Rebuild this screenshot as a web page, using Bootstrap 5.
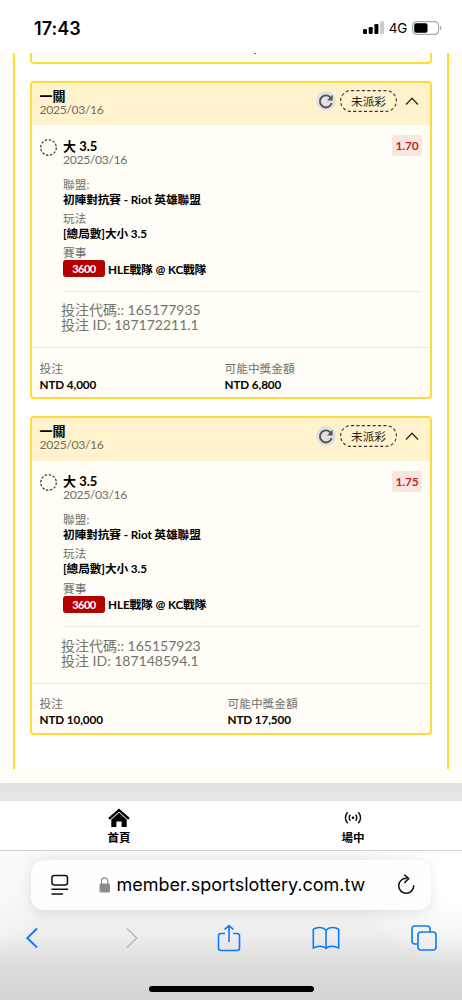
<!DOCTYPE html>
<html lang="zh-Hant">
<head>
<meta charset="utf-8">
<meta name="viewport" content="width=device-width, initial-scale=1">
<title>投注紀錄</title>
<link rel="stylesheet" href="https://cdn.jsdelivr.net/npm/bootstrap@5.3.0/dist/css/bootstrap.min.css">
<style>
body{height:1000px;width:462px;overflow:hidden;background:#fff;color:#000;font-family:Lato,"Noto Sans CJK TC",sans-serif;font-size:11.7px}
.ui{font-family:Inter,"Liberation Sans",sans-serif}
.status{height:53px;padding:3px 20px 0 34px}
.clock{font-size:18px;font-weight:600;letter-spacing:.05px}
.net{font-size:13.5px;font-weight:400;letter-spacing:-.3px}
.page{height:730px;background:#fffdf5;padding:0 13px 14px}
.panel{height:716px;background:#fff;border:solid #fddb3b;border-width:0 2px;padding:0 15px}
.prev{height:11px;border:2px solid #fddb3b;border-top:0;border-radius:0 0 4px 4px;background:#fffdf5;margin-bottom:17px}
.prev i{position:absolute;left:222px;top:0;width:2px;height:1px;background:#777}
.slip{height:318.3px;border:2px solid #fddb3b;border-radius:4px;background:#fffdf5;margin-bottom:17px;overflow:hidden}
.slip-head{height:42.3px;background:#fff2cc;padding:0 11px 0 7.5px}
.t1{font-size:13px;font-weight:700;line-height:15px;height:14px}
.day{font-size:12.2px;line-height:14px;height:14px;color:#6f6f68;letter-spacing:-.36px}
.refresh{width:20px;height:20px;border-radius:50%;background:#e2e2e2}
.pill{width:57px;height:22px}
.pill svg{position:absolute;inset:0}
.pill span{position:relative;font-size:11.7px;line-height:22px;color:#222}
.slip-body{height:222px;padding:10px 8px 0 7.5px}
.ring{margin-top:3.5px;width:17px;height:17px}
.odds{width:30px;height:21px;border-radius:3px;background:#f9e6df;color:#b92b27;font-weight:700;font-size:12px;line-height:21px;letter-spacing:-.2px}
.k{color:#6f6f6b;line-height:15px;height:15px}
.v{font-weight:700;line-height:14px;height:14px;margin-bottom:5.3px;letter-spacing:-.1px}
.tag{width:42px;height:17px;border-radius:3px;background:#b50000;color:#fff;font-size:11px;line-height:17px;font-weight:700;letter-spacing:-.5px}
.rule{height:1px;background:#ece9e3;margin:13.5px 2.5px 0 23.5px}
.ids{font-size:14px;line-height:15px;color:#74746f;margin:10.6px 0 0 21.5px}
.slip-foot{border-top:1px solid #ece9e3;padding:12.7px 8px 0 7.5px}
.slip-foot .v{padding-top:.6px}
.stake{width:185px}.stake-l{width:188px}
.band{height:18px;background:linear-gradient(#e1e1e1,#e7e7e7)}
.tabs{height:50px;border-bottom:1px solid #d5d5d7}
.tab-i{width:60px;font-size:11.5px;font-weight:700;line-height:16px}
.chrome{height:149px;background:radial-gradient(ellipse 110px 90px at 100% 18%,#fff 25%,#fff0),radial-gradient(ellipse 50px 80px at 0 15%,#fafafa 20%,#fafafa00),linear-gradient(#f7f7f7 0,#eeeeef 55%,#dcdcdc 78%,#d3d3d3 100%)}
.address{width:400px;height:50px;margin:8.5px 0 0 31px;border-radius:13px;background:#fefefe;box-shadow:0 2px 12px #00000018}
.url{font-size:18px;letter-spacing:-.02px;line-height:24px;padding-top:1px}
.tools{height:32px;margin-top:12px;padding:0 24px;color:#0a7bff}
.home-bar{width:165px;height:6px;border-radius:3px;background:#000;margin:32px auto 0}
svg{display:block;flex:none}
</style>
</head>
<body>
<svg width="0" height="0" class="position-absolute">
<symbol id="again" viewBox="0 0 20 20"><path d="M15 7.2A6 6 0 1 0 15.7 12" fill="none" stroke="#555" stroke-width="1.9"/><path d="M16.6 3.8v5.6H11z" fill="#555"/></symbol>
<symbol id="up" viewBox="0 0 14 9"><path d="M1 7.5 7 1.3l6 6.2" fill="none" stroke="#333" stroke-width="1.5"/></symbol>
<symbol id="dash" viewBox="0 0 57 22"><rect x=".6" y=".6" width="55.8" height="20.8" rx="10.4" fill="none" stroke="#333" stroke-width="1.1" stroke-dasharray="3.1 2.3"/></symbol>
<symbol id="ring" viewBox="0 0 17 17"><circle cx="8.5" cy="8.5" r="7.8" fill="none" stroke="#222" stroke-width="1.1" stroke-dasharray="2.5 1.58"/></symbol>
</svg>

<header class="status ui d-flex align-items-center justify-content-between">
<div class="clock">17:43</div>
<div class="d-flex align-items-center">
<svg width="22" height="14" viewBox="0 0 22 14"><rect x="0" y="8" width="4" height="5" rx="1.2"/><rect x="5.7" y="6" width="4" height="7" rx="1.2"/><rect x="11.4" y="3" width="4" height="10" rx="1.2"/><rect x="17" y="0" width="4" height="13" rx="1.2" fill="#ccc"/></svg>
<span class="net" style="margin-left:4px;margin-right:5px">4G</span>
<svg width="30" height="14" viewBox="0 0 30 14"><rect x=".6" y=".6" width="26" height="12.8" rx="4" fill="none" stroke="#aaa" stroke-width="1.2"/><rect x="2.2" y="2.3" width="13.3" height="9.4" rx="2"/><path d="M28 4.7q1.5.5 1.5 2.3T28 9.3z" fill="#aaa"/></svg>
</div>
</header>

<main class="page">
<div class="panel">
<div class="prev position-relative"><i></i></div>

<section class="slip">
<div class="slip-head d-flex align-items-start">
<div class="me-auto" style="padding-top:6px"><div class="t1">一關</div><div class="day">2025/03/16</div></div>
<div class="d-flex align-items-center" style="padding-top:7px">
<div class="refresh"><svg width="20" height="20"><use href="#again"/></svg></div>
<div class="pill position-relative text-center ms-1"><svg width="57" height="22"><use href="#dash"/></svg><span>未派彩</span></div>
<svg class="ms-2" width="14" height="9"><use href="#up"/></svg>
</div>
</div>
<div class="slip-body">
<div class="d-flex">
<div class="ring"><svg width="17" height="17"><use href="#ring"/></svg></div>
<div class="me-auto" style="margin-left:6.5px;padding-top:3.5px"><div class="t1">大 3.5</div><div class="day">2025/03/16</div></div>
<div class="odds text-center">1.70</div>
</div>
<div style="margin:10px 0 0 23.5px">
<div class="k">聯盟:</div><div class="v">初陣對抗賽 - Riot 英雄聯盟</div>
<div class="k">玩法</div><div class="v">[總局數]大小 3.5</div>
<div class="k">賽事</div>
<div class="d-flex align-items-center"><span class="tag text-center">3600</span><span class="v mb-0" style="margin-left:3px">HLE戰隊 @ KC戰隊</span></div>
</div>
<div class="rule"></div>
<div class="ids">投注代碼:: 165177935<br>投注 ID: 187172211.1</div>
</div>
<div class="slip-foot d-flex">
<div class="stake"><div class="k">投注</div><div class="v">NTD 4,000</div></div>
<div><div class="k">可能中獎金額</div><div class="v">NTD 6,800</div></div>
</div>
</section>

<section class="slip">
<div class="slip-head d-flex align-items-start">
<div class="me-auto" style="padding-top:6px"><div class="t1">一關</div><div class="day">2025/03/16</div></div>
<div class="d-flex align-items-center" style="padding-top:7px">
<div class="refresh"><svg width="20" height="20"><use href="#again"/></svg></div>
<div class="pill position-relative text-center ms-1"><svg width="57" height="22"><use href="#dash"/></svg><span>未派彩</span></div>
<svg class="ms-2" width="14" height="9"><use href="#up"/></svg>
</div>
</div>
<div class="slip-body">
<div class="d-flex">
<div class="ring"><svg width="17" height="17"><use href="#ring"/></svg></div>
<div class="me-auto" style="margin-left:6.5px;padding-top:3.5px"><div class="t1">大 3.5</div><div class="day">2025/03/16</div></div>
<div class="odds text-center">1.75</div>
</div>
<div style="margin:10px 0 0 23.5px">
<div class="k">聯盟:</div><div class="v">初陣對抗賽 - Riot 英雄聯盟</div>
<div class="k">玩法</div><div class="v">[總局數]大小 3.5</div>
<div class="k">賽事</div>
<div class="d-flex align-items-center"><span class="tag text-center">3600</span><span class="v mb-0" style="margin-left:3px">HLE戰隊 @ KC戰隊</span></div>
</div>
<div class="rule"></div>
<div class="ids">投注代碼:: 165157923<br>投注 ID: 187148594.1</div>
</div>
<div class="slip-foot d-flex">
<div class="stake-l"><div class="k">投注</div><div class="v">NTD 10,000</div></div>
<div><div class="k">可能中獎金額</div><div class="v">NTD 17,500</div></div>
</div>
</section>
</div>
</main>

<div class="band"></div>
<nav class="tabs d-flex justify-content-between bg-white" style="padding:7px 79px 0 89px">
<div class="tab-i text-center"><svg class="mx-auto" width="22" height="20" viewBox="0 0 22 20"><path d="M1 10.8 11 2l10 8.8" fill="none" stroke="#000" stroke-width="2.4"/><path d="M3.3 11.5 11 4.8l7.7 6.7V19H13.6v-5.5H8.4V19H3.3z"/></svg><div style="padding-top:2px">首頁</div></div>
<div class="tab-i text-center"><svg class="mx-auto" width="18" height="20" viewBox="0 0 18 20"><circle cx="9" cy="9.7" r="1.3"/><path d="M6.4 6.7q-2.4 3 0 6M11.6 6.7q2.4 3 0 6M3.6 4.2q-4.3 5.5 0 11M14.4 4.2q4.3 5.5 0 11" fill="none" stroke="#111" stroke-width="1.4"/></svg><div style="padding-top:2px">場中</div></div>
</nav>

<footer class="chrome ui d-flow-root overflow-hidden">
<div class="address d-flex align-items-center">
<svg style="margin-left:20px" width="18" height="22" viewBox="0 0 18 22"><g fill="none" stroke="#111" stroke-width="1.5" stroke-linecap="round"><rect x=".9" y="1.4" width="15.6" height="9.5" rx="2.4"/><path d="M1 15.3h15.6M1 20h10.5"/></g></svg>
<svg style="margin-left:30px" width="12" height="16" viewBox="0 0 12 16"><rect x=".5" y="6.5" width="10.5" height="9" rx="1.5" fill="#8b8b90"/><path d="M2.5 7V4.2a3.2 3.4 0 0 1 6.4 0V7" fill="none" stroke="#8b8b90" stroke-width="1.2"/></svg>
<span class="url" style="margin-left:5.5px">member.sportslottery.com.tw</span>
<svg class="ms-auto" style="margin-right:16px" width="18" height="22" viewBox="0 0 18 22"><path d="M9.2 4.3a7.5 7.5 0 1 0 7.5 7.5M7.7 1l4 3.6-4 3.9" fill="none" stroke="#111" stroke-width="1.5" stroke-linecap="round" stroke-linejoin="round"/></svg>
</div>
<div class="tools d-flex align-items-center">
<svg width="16" height="22" viewBox="0 0 16 22"><path d="M13 1.5 3.3 11l9.7 9.5" fill="none" stroke="currentColor" stroke-width="1.9"/></svg>
<svg style="margin-left:84px" width="16" height="22" viewBox="0 0 16 22"><path d="m3 1.5 9.7 9.5L3 20.5" fill="none" stroke="#bbb" stroke-width="1.7"/></svg>
<svg style="margin-left:77px" width="24" height="28" viewBox="0 0 24 28"><path d="M8 9.5H4a2.5 2.5 0 0 0-2.5 2.5v12A2.5 2.5 0 0 0 4 26.5h16a2.5 2.5 0 0 0 2.5-2.5V12A2.5 2.5 0 0 0 20 9.5h-4M12 18V1.5M7.6 5.7 12 1.5l4.4 4.2" fill="none" stroke="currentColor" stroke-width="1.6"/></svg>
<svg style="margin-left:71px" width="28" height="24" viewBox="0 0 28 24"><path d="M14 4.2C11 .8 5 .8 1.3 3.4v18.8C5 19.8 11 19.4 14 22.4c3-3 9-2.6 12.7-.2V3.4C23 .8 17 .8 14 4.2zv18.2" fill="none" stroke="currentColor" stroke-width="1.6" stroke-linejoin="round"/></svg>
<svg style="margin-left:71px" width="26" height="26" viewBox="0 0 26 26"><g fill="none" stroke="currentColor" stroke-width="1.6"><rect x="7" y="7" width="18" height="18" rx="3"/><path d="M7 19H4a3 3 0 0 1-3-3V4a3 3 0 0 1 3-3h12a3 3 0 0 1 3 3v3"/></g></svg>
</div>
<div class="home-bar"></div>
</footer>
<script src="https://cdn.jsdelivr.net/npm/bootstrap@5.3.0/dist/js/bootstrap.bundle.min.js"></script>
</body>
</html>
